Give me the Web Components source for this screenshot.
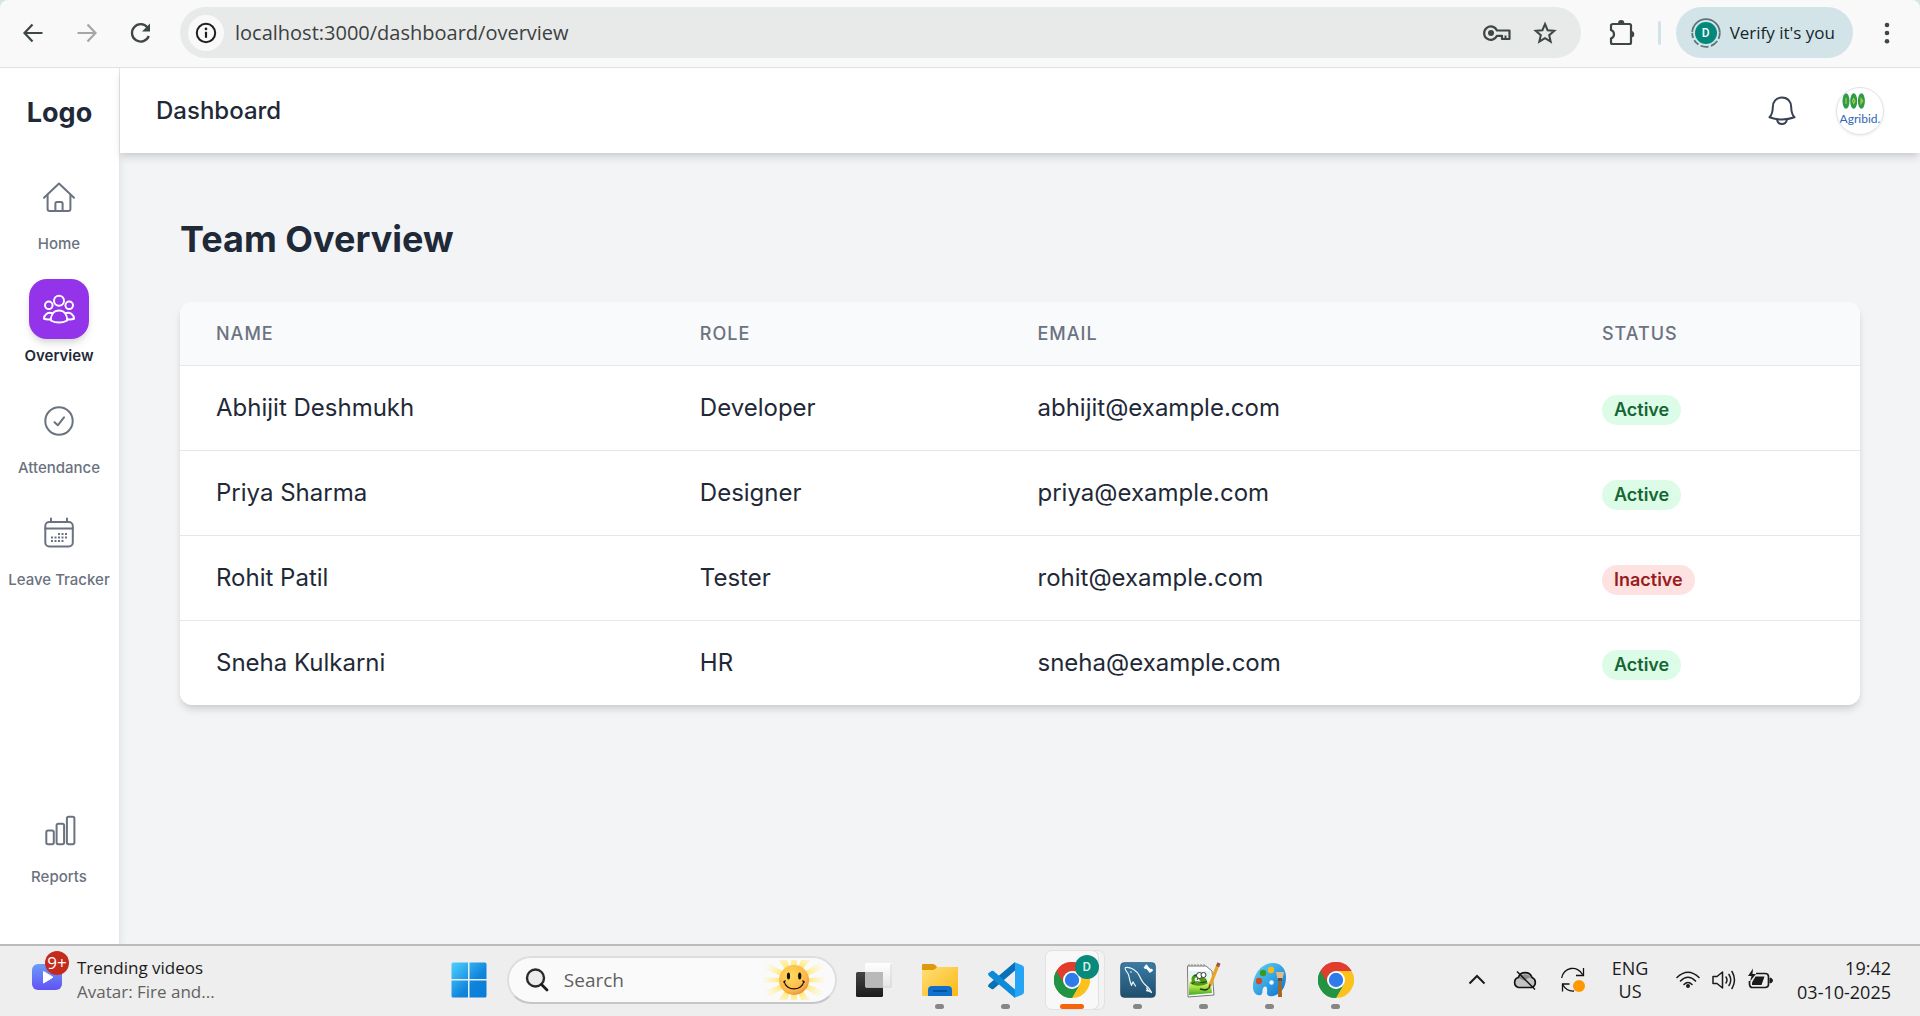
<!DOCTYPE html>
<html lang="en">
<head>
<meta charset="utf-8">
<title>Dashboard</title>
<style>
  html, body { margin: 0; height: 100%; }
  body { font-family: Inter, "Liberation Sans", sans-serif; background: #f3f4f6; overflow: hidden; }
</style>
</head>
<body>
<desktop-screen>
  <browser-toolbar slot="top" url="localhost:3000/dashboard/overview"></browser-toolbar>
  <dashboard-app slot="page">
    <side-nav slot="nav">
      <nav-item icon="home">Home</nav-item>
      <nav-item icon="team" active>Overview</nav-item>
      <nav-item icon="check">Attendance</nav-item>
      <nav-item icon="calendar">Leave Tracker</nav-item>
      <nav-item icon="reports" slot="bottom">Reports</nav-item>
    </side-nav>
    <page-header slot="header">Dashboard</page-header>
    <team-table>Team Overview</team-table>
  </dashboard-app>
  <task-bar slot="bottom"></task-bar>
</desktop-screen>

<script>
const svg = (w, h, body, extra = '') =>
  `<svg width="${w}" height="${h}" viewBox="0 0 ${w} ${h}" fill="none" aria-hidden="true" ${extra}>${body}</svg>`;
const line = 'stroke="currentColor" stroke-width="2" stroke-linecap="round" stroke-linejoin="round"';

const chrome = `
  <path d="M18 18 2.4 9A18 18 0 0 1 33.6 9Z" fill="#e33b2e"/>
  <path d="M18 18 2.4 9A18 18 0 0 0 18 36L25.8 22.5Z" fill="#229342"/>
  <path d="M18 9H33.6A18 18 0 0 1 18 36L25.8 22.5Z" fill="#fcc21b"/>
  <path d="M2.4 9 10.2 22.5 18 18 18 9Z" fill="#229342"/>
  <path d="M2.4 9A18 18 0 0 1 33.6 9H18A9 9 0 0 0 10.2 22.5Z" fill="#e33b2e"/>
  <path d="M2.4 9 10.2 22.5A9 9 0 0 0 25.8 22.5L18 36A18 18 0 0 1 2.4 9Z" fill="#229342"/>
  <circle cx="18" cy="18" r="9" fill="#fff"/><circle cx="18" cy="18" r="7.2" fill="#2f7bea"/>`;

const ICONS = {
  home: svg(36, 36, `<g ${line}><path d="M3 18.8 18 4.5 33 18.8"/><path d="M6.6 16V30a2 2 0 0 0 2 2H27.400a2 2 0 0 0 2-2V16"/><path d="M14.400 32V24.500a1.500 1.500 0 0 1 1.500-1.500H20.100a1.500 1.500 0 0 1 1.500 1.500V32"/></g>`),
  team: svg(36, 36, `<g ${line}><circle cx="18" cy="9.800" r="5"/><circle cx="7.800" cy="14.300" r="3.800"/><circle cx="28.200" cy="14.300" r="3.800"/><path d="M9.800 29.500C9.800 23.500 13 19.600 18 19.600S26.200 23.500 26.200 29.500Q22.500 31.600 18 31.600T9.800 29.500Z"/><path d="M11.500 22.200C6.500 20.800 3 24 3 27.800Q5.500 28.700 9.600 28.300"/><path d="M24.500 22.200C29.500 20.800 33 24 33 27.800Q30.500 28.700 26.400 28.300"/></g>`),
  check: svg(36, 36, `<g ${line}><circle cx="18" cy="18" r="13.700"/><path d="M13.500 19.200 16.800 22.300 23 14.300"/></g>`),
  calendar: svg(36, 36, `<g ${line}><rect x="4.300" y="7" width="27.500" height="24.500" rx="4"/><path d="M10 3.500V7M26 3.500V7M4.300 13.500H31.800"/></g><g fill="currentColor"><path d="M17 18h2v2h-2zM20.500 18h2v2h-2zM24 18h2v2h-2zM10 21.500h2v2h-2zM13.500 21.500h2v2h-2zM17 21.500h2v2h-2zM20.500 21.500h2v2h-2zM24 21.500h2v2h-2zM10 25h2v2h-2zM13.500 25h2v2h-2zM17 25h2v2h-2zM20.500 25h2v2h-2z"/></g>`),
  reports: svg(36, 36, `<g ${line}><rect x="5.300" y="18.500" width="7.500" height="13.800" rx="1.800"/><rect x="15.600" y="11.800" width="7.500" height="20.500" rx="1.800"/><rect x="25.900" y="4.800" width="7.500" height="27.500" rx="1.800"/></g>`),
  bell: svg(36, 36, `<g ${line}><path d="M18 4.500C12 4.500 8.800 9 8.800 14C8.800 18.500 8.200 21.500 5.500 24.300Q11.500 26.500 18 26.500T30.500 24.300C27.800 21.500 27.200 18.500 27.200 14C27.200 9 24 4.500 18 4.500Z"/><path d="M13.200 27a4.900 5 0 0 0 9.600 0"/></g>`),

  back: svg(24, 24, '<path d="M11.500 3.500 3.500 12l8 8.500M4 12h17.500" stroke="currentColor" stroke-width="2.200"/>'),
  forward: svg(24, 24, '<path d="M12.500 3.500 20.500 12l-8 8.500M20 12H2.500" stroke="currentColor" stroke-width="2.200"/>'),
  reload: svg(24, 24, '<path d="M19.800 15A8.700 8.700 0 1 1 18.500 6.500" stroke="currentColor" stroke-width="2.300"/><path d="M21 2.500V10.500H13Z" fill="currentColor"/>'),
  info: svg(24, 24, '<circle cx="12" cy="12" r="9.200" stroke="currentColor" stroke-width="2"/><path d="M12 10.800v6" stroke="currentColor" stroke-width="2.200"/><circle cx="12" cy="7.900" r="1.300" fill="currentColor"/>'),
  key: svg(28, 20, '<path d="M14 7.500A6.700 6.700 0 1 0 14 12.800H19V16H26.500V7.500Z" stroke="currentColor" stroke-width="2.200" stroke-linejoin="round"/><path d="M22.500 12.500V16" stroke="currentColor" stroke-width="2"/><circle cx="8" cy="10" r="3" fill="currentColor"/>'),
  star: svg(24, 24, '<path d="M12 3 14.600 9.200 21.300 9.800 16.200 14.200 17.700 20.700 12 17.200 6.300 20.700 7.800 14.200 2.700 9.800 9.400 9.200Z" stroke="currentColor" stroke-width="2"/>'),
  puzzle: svg(28, 28, '<path d="M5 5H21.500Q23 5 23 6.500V23.500Q23 25 21.500 25H4.500Q3 25 3 23.500V19.500A4.500 4.500 0 0 0 3 11V6.500Q3 5 5 5Z" stroke="currentColor" stroke-width="2.200"/><path d="M10 4.500a3.200 3.400 0 0 1 6.400 0zM23 12a3.200 3.200 0 0 1 0 6.500z" fill="currentColor"/>'),
  dots: svg(8, 24, '<g fill="currentColor"><circle cx="4" cy="4" r="2.300"/><circle cx="4" cy="12" r="2.300"/><circle cx="4" cy="20.300" r="2.300"/></g>'),

  windows: svg(36, 36, '<defs><linearGradient id="w" x1="0" y1="0" x2="36" y2="36" gradientUnits="userSpaceOnUse"><stop stop-color="#4fd2ff"/><stop offset=".6" stop-color="#0f84dc"/><stop offset="1" stop-color="#0a7ad6"/></linearGradient></defs><path d="M2 .5H17V17H.5V2Q.5.500 2 .5ZM18.500.5H34Q35.500.500 35.500 2V17H18.500ZM.5 18.500H17V35.500H2Q.5 35.500.5 34ZM18.500 18.500H35.500V34Q35.500 35.500 34 35.500H18.500Z" fill="url(#w)"/>'),
  search: svg(24, 24, '<circle cx="10.500" cy="10" r="8.500" fill="#ececec" stroke="#2a2a2a" stroke-width="2.400"/><path d="M16.500 16.500 22 22" stroke="#1b1b1b" stroke-width="2.800" stroke-linecap="round"/>'),
  sun: svg(60, 40, '<defs><radialGradient id="r" cx="30" cy="20" r="29" gradientUnits="userSpaceOnUse"><stop offset=".5" stop-color="#ffe97a"/><stop offset="1" stop-color="#fff3b8" stop-opacity=".3"/></radialGradient><radialGradient id="f" cx=".4" cy=".35" r=".7"><stop stop-color="#ffdc5a"/><stop offset=".75" stop-color="#fdb54a"/><stop offset="1" stop-color="#e88a3c"/></radialGradient></defs><path fill="url(#r)" d="M27 0h6v8h-6zM27 32h6v8h-6zM0 17l16 1v4L0 23zM60 17l-16 1v4l16 1zM14 0h9l3 8-4 2zM46 0h-9l-3 8 4 2zM14 40h9l3-8-4-2zM46 40h-9l-3-8 4-2zM5 3l15 9-3 4L1 9zM55 3l-15 9 3 4 16-7zM5 37l15-9-3-4L1 31zM55 37l-15-9 3-4 16 7z"/><circle cx="30" cy="20" r="15" fill="url(#f)"/><ellipse cx="24.500" cy="16" rx="1.600" ry="3.600" fill="#111"/><ellipse cx="35.700" cy="16" rx="1.600" ry="3.600" fill="#111"/><path d="M20 21C22 31.500 38 31.500 40 21M19.500 22.500l2-2M40.500 22.500l-2-2" stroke="#111" stroke-width="1.200"/>'),
  taskview: svg(36, 36, '<defs><linearGradient id="t" x2="0" y2="1"><stop stop-color="#444"/><stop offset="1" stop-color="#1c1c1c"/></linearGradient><linearGradient id="u" x2="0" y2="1"><stop stop-color="#fff"/><stop offset="1" stop-color="#e6e6e6"/></linearGradient></defs><rect y="10" width="27" height="25" rx="1.500" fill="url(#t)"/><rect x="9" y="1" width="27" height="24.500" rx="1.500" fill="url(#u)"/><path d="M10 25H35V2" stroke="#d4d4d4"/><path d="M9 10H27V25H9Z" fill="#b9b9b9"/>'),
  folder: svg(36, 36, '<defs><linearGradient id="o" x2="1" y2="1"><stop stop-color="#ffe07a"/><stop offset="1" stop-color="#fcb714"/></linearGradient></defs><path d="M0 3Q0 2 1 2H11Q13 2 15 5H35Q36 5 36 6V12H0Z" fill="#dc9a0c"/><path d="M0 8H11Q13 8 15 5H35Q36 5 36 6V33Q36 34 35 34H1Q0 34 0 33Z" fill="url(#o)"/><path d="M6 34V28Q6 24 10 24H26Q30 24 30 28V34Z" fill="#0f71cd"/><path d="M11 29H25" stroke="#07488a" stroke-width="1.500"/>'),
  vscode: svg(36, 36, '<path d="M0 24.500 3.500 27Q4.500 27.500 5.500 27L27 8.500V0L1 22Q0 23.200 0 24.500Z" fill="#0a70b8"/><path d="M0 11.500 3.500 9Q4.500 8.500 5.500 9L27 27.500V36L1 14Q0 12.800 0 11.500Z" fill="#0d8ad8"/><path d="M26 0 34.500 3.500Q36 4.200 36 6V30Q36 31.800 34.500 32.500L26 36Q27 35.500 27 34V2Q27 .5 26 0Z" fill="#27a5f5"/>'),
  chrome: svg(36, 36, chrome),
  mysql: svg(36, 36, '<defs><linearGradient id="m" x2="0" y2="1"><stop stop-color="#3a7ba6"/><stop offset="1" stop-color="#1f4e6c"/></linearGradient></defs><rect x=".5" y=".5" width="35" height="35" rx="4" fill="url(#m)" stroke="#16405c" stroke-opacity=".5"/><path d="M11.500 23.500C8.800 17 9.500 14 8 11.500C6 9 4.500 6.500 5.500 5.500C10 4.500 17 8.500 19.500 14C21.500 18.500 22.500 21 26 23.500C28.500 25.500 30 27.500 31 29.500C28.500 29 27.500 29.500 26.500 28.500M26.500 26C27.500 28.500 30 29.500 31.500 30.500M11.500 23.500C12 21.500 12.500 20.500 13 20L15.500 24" stroke="#eef6fb" stroke-width="1.200" stroke-linecap="round"/><circle cx="11" cy="10" r=".8" fill="#fff"/><path d="M26 4.500 30.500 9" stroke="#fff" stroke-width="3"/><path d="M24.500 6.500 27 3M29 10 32.500 7.500" stroke="#fff" stroke-width="2.200"/>'),
  notepad: svg(36, 36, '<defs><linearGradient id="n" x2="0" y2="1"><stop stop-color="#dff3ff"/><stop offset=".4" stop-color="#f2fae0"/><stop offset=".65" stop-color="#b4e34a"/><stop offset="1" stop-color="#3fae1c"/></linearGradient></defs><path d="M1.500 4H20L26 9 28 33 2 35Z" fill="#fdfdfd" stroke="#777"/><path d="M3 9H24L26 31 3 33Z" fill="url(#n)"/><path d="M3 4v-2M6 4v-2M9 4v-2M12 4v-2M15 4v-2M18 4v-2" stroke="#888"/><path d="M8 20C5 15 10 12 13 15L16 19C20 22 21 16 15 17M5 20C9 24 18 22 21 20" stroke="#4a9c10" stroke-width="3"/><path d="M6 22C10 17 16 23 21 19M8 14C11 12 13 16 11 18" stroke="#253a12" stroke-width="1"/><circle cx="13.500" cy="13.500" r="3" fill="#fff" stroke="#333"/><circle cx="17.500" cy="13" r="2.500" fill="#fff" stroke="#333"/><path d="M14 27l5 1 3-1" stroke="#22350f" stroke-width="1.600"/><path d="M31.500 4 24 23.500" stroke="#e9a51f" stroke-width="3.400"/><path d="M33 1 31.500 4.500" stroke="#a05048" stroke-width="3.400"/><path d="M24.200 22.500 22.500 27" stroke="#5a4326" stroke-width="1.500"/>'),
  paint: svg(36, 36, '<defs><linearGradient id="p" x2="1" y2="1"><stop stop-color="#5fd8f8"/><stop offset="1" stop-color="#0c6fd0"/></linearGradient></defs><path d="M21 1C9 1 1 13 1 25C1 31 5 34 8.500 33C12 32 9 27 12 25C16 23 15 29 15 31C15 35 20 35 24 33C31 30 34 23 34 15C34 7 29 1 21 1Z" fill="url(#p)"/><circle cx="11" cy="11" r="3.200" fill="#3b9a1d"/><circle cx="19" cy="8" r="3.200" fill="#fcb813"/><circle cx="7" cy="19" r="3.200" fill="#d4491d"/><circle cx="19.500" cy="20.500" r="2.200" fill="#eaf7ff"/><path d="M26.500 15H29.500L30 35H26Z" fill="#a8661c"/><path d="M24 10H32Q31.500 13 30.500 17H25.500Z" fill="#e3b987"/><path d="M25.800 16H30.200V19H25.800Z" fill="#555"/>'),
  widget: svg(30, 26, '<defs><linearGradient id="v" x2="0" y2="1"><stop stop-color="#6a9dfa"/><stop offset="1" stop-color="#6252f4"/></linearGradient></defs><rect width="30" height="26" rx="6" fill="url(#v)"/><path d="M11.500 7.500V19L21 13.200Z" fill="#fff" stroke="#fff" stroke-linejoin="round"/>'),
  chevron: svg(24, 24, '<path d="M4.500 15.500 12 8l7.500 7.500" stroke="currentColor" stroke-width="2"/>'),
  cloud: svg(26, 24, '<path d="M6.500 19.500A5.200 5.200 0 0 1 6.300 9.500A7.300 7.300 0 0 1 20 9.500A5.300 5.300 0 0 1 19.500 19.500Z" fill="#c4c4c4"/><path d="M6.500 10Q13 3 19 9.500Q14 10 13 13Z" fill="#8b8b8b"/><path d="M6.500 19.500A5.200 5.200 0 0 1 6.300 9.500A7.300 7.300 0 0 1 20 9.500A5.300 5.300 0 0 1 19.500 19.500Z" stroke="#111" stroke-width="1.700"/><path d="M5 3.500 23 21.500" stroke="#111" stroke-width="1.500"/>'),
  sync: svg(26, 28, '<path d="M1.700 12A11 11 0 0 1 22.500 8.500M23.500 2V9.500H16M2.500 25.500V18H9.500M3 19A11.500 11.500 0 0 0 14 25" stroke="#111" stroke-width="1.300"/><circle cx="19" cy="20" r="6" fill="#ff9800"/>'),
  wifi: svg(26, 24, '<g stroke="currentColor" stroke-width="1.600" stroke-linecap="round"><path d="M2 9.500Q13-1 24 9.500"/><path d="M5.500 13Q13 5.500 20.500 13"/><path d="M9 16.500Q13 12.500 17 16.500"/></g><circle cx="13" cy="18" r="2" fill="currentColor"/>'),
  speaker: svg(26, 24, '<g stroke="currentColor" stroke-width="1.500" stroke-linejoin="round" stroke-linecap="round"><path d="M2 8.500H6L11.500 4V20L6 15.500H2Z"/><path d="M15 9Q17 12 15 15M18 6.500Q21.500 12 18 17.500M21 3.500Q26 12 21 20.500"/></g>'),
  battery: svg(26, 24, '<path d="M9 5.500H18Q21.500 5.500 21.500 8.500V16Q21.500 19.500 18 19.500H5.500Q2.500 19.500 2.500 16V13" stroke="currentColor" stroke-width="1.700"/><path d="M23 10Q25.500 10.500 25.500 12.500T23 15Z" fill="currentColor" stroke="currentColor"/><path d="M8.500 8.500H17.500L14.500 17H5V14.500Z" fill="currentColor"/><path d="M6 .5 1 8H4.500L3 13.500 9 6H5.500Z" fill="currentColor"/>'),
};

function define(name, render) {
  customElements.define(name, class extends HTMLElement {
    connectedCallback() {
      if (this.shadowRoot) return;
      this.attachShadow({ mode: 'open' }).innerHTML = render(this);
    }
  });
}

const reset = `
  :host, * { box-sizing: border-box; }
  button { border: 0; padding: 0; background: none; font: inherit; color: inherit; display: inline-flex; align-items: center; justify-content: center; flex: none; }
  a { text-decoration: none; color: inherit; }
  input { border: 0; outline: 0; background: none; padding: 0; margin: 0; font: inherit; color: inherit; min-width: 0; }
  svg { display: block; flex: none; }`;

define('ui-icon', el => `<style>:host { display: inline-flex; flex: none; } svg { display: block; }</style>${ICONS[el.getAttribute('name')]}`);

define('desktop-screen', () => `<style>
  :host { display: flex; flex-direction: column; height: 100vh; }
  .page { flex: 1; min-height: 0; display: flex; }
  ::slotted([slot=page]) { flex: 1; min-width: 0; }
</style><slot name="top"></slot><div class="page"><slot name="page"></slot></div><slot name="bottom"></slot>`);

define('browser-toolbar', el => `<style>${reset}
  :host { display: block; flex: none; background: #d3e4e9; font-family: "Open Sans", "Noto Sans", sans-serif; color: #3f4746; }
  .bar { display: flex; align-items: center; height: 68px; padding: 0 21px 2px 15px; background: #f9f9f9; border-bottom: 1px solid #dfe1e1; border-radius: 8px 8px 0 0; }
  .nav { display: flex; gap: 18px; margin-right: 21px; }
  .nav button { width: 36px; height: 36px; }
  .off { color: #a5a7a7; }
  .address { flex: 1; min-width: 0; display: flex; align-items: center; height: 51px; border-radius: 26px; background: #e8eaea; padding: 0 24px 0 8px; }
  .info { width: 36px; height: 36px; border-radius: 50%; background: #f9f9f9; color: #1f1f1f; margin-right: 11px; }
  .address input { flex: 1; font-size: 20px; height: 36px; color: #3c4040; }
  .tools { display: flex; gap: 22px; }
  .puzzle { margin: 0 22px 0 27px; }
  .rule { width: 3px; height: 24px; border-radius: 2px; background: #d3e4e9; margin: 0 15px 0 0; }
  .verify { height: 51px; border-radius: 26px; background: #d3e4e9; padding: 0 18px 0 15px; gap: 9px; font-size: 17px; color: #14262a; white-space: nowrap; }
  .who { width: 30px; height: 30px; display: grid; place-items: center; position: relative; }
  .who svg { position: absolute; inset: 0; }
  .who span { position: relative; color: #fff; font: 500 12px Roboto, sans-serif; }
  .more { width: 24px; height: 36px; margin-left: 22px; }
</style>
<div class="bar">
  <div class="nav">
    <button aria-label="Back"><ui-icon name="back"></ui-icon></button>
    <button aria-label="Forward" class="off"><ui-icon name="forward"></ui-icon></button>
    <button aria-label="Reload"><ui-icon name="reload"></ui-icon></button>
  </div>
  <div class="address">
    <button class="info" aria-label="Site information"><ui-icon name="info"></ui-icon></button>
    <input type="text" aria-label="Address" value="${el.getAttribute('url')}">
    <div class="tools">
      <button aria-label="Passwords"><ui-icon name="key"></ui-icon></button>
      <button aria-label="Bookmark"><ui-icon name="star"></ui-icon></button>
    </div>
  </div>
  <button class="puzzle" aria-label="Extensions"><ui-icon name="puzzle"></ui-icon></button>
  <div class="rule"></div>
  <button class="verify"><span class="who">${svg(30, 30, '<circle cx="15" cy="15" r="13.800" stroke="#5c7479" stroke-width="1.800" stroke-dasharray="6 2.500 8 2.500 8 2.500 6 2.500 5 1 42"/><circle cx="15" cy="15" r="11" fill="#00897b"/>')}<span>D</span></span>Verify it's you</button>
  <button class="more" aria-label="Menu"><ui-icon name="dots"></ui-icon></button>
</div>`);

define('dashboard-app', () => `<style>
  :host { display: grid; grid-template-columns: 120px minmax(0, 1fr); background: #f3f4f6; color: #1f2937; overflow: hidden; }
  .main { display: flex; flex-direction: column; min-width: 0; }
  ::slotted([slot=header]) { z-index: 2; }
  ::slotted([slot=nav]) { z-index: 1; }
</style><slot name="nav"></slot><div class="main"><slot name="header"></slot><slot></slot></div>`);

define('side-nav', () => `<style>${reset}
  :host { display: flex; flex-direction: column; background: #fff; border-right: 1px solid #e5e7eb; box-shadow: 0 6px 9px -1px rgba(0,0,0,.1); }
  .logo { height: 99px; display: flex; align-items: center; justify-content: center; padding-bottom: 10px; font-size: 27px; line-height: 40px; font-weight: 700; color: #1f2937; }
  nav { flex: 1; display: flex; flex-direction: column; gap: 24px; }
  .end { margin-top: auto; padding-bottom: 56px; }
</style><div class="logo">Logo</div><nav><slot></slot><div class="end"><slot name="bottom"></slot></div></nav>`);

define('nav-item', el => `<style>${reset}
  :host { display: block; color: #6b7280; padding-right: 1px; }
  :host([active]) { color: #1f2937; }
  a { display: flex; flex-direction: column; align-items: center; gap: 6px; }
  .box { width: 60px; height: 60px; display: grid; place-items: center; border-radius: 18px; }
  :host([active]) .box { background: #9333ea; color: #fff; box-shadow: 0 6px 9px -1px rgba(0,0,0,.1), 0 3px 6px -2px rgba(0,0,0,.1); }
  .label { font-size: 15px; line-height: 22px; font-weight: 500; white-space: nowrap; }
  :host([active]) .label { font-weight: 600; }
</style><a href="#"><span class="box"><ui-icon name="${el.getAttribute('icon')}"></ui-icon></span><span class="label"><slot></slot></span></a>`);

define('page-header', () => `<style>${reset}
  :host { display: flex; align-items: center; gap: 36px; height: 85px; padding: 0 36px; background: #fff; box-shadow: 0 6px 9px -1px rgba(0,0,0,.1), 0 3px 6px -2px rgba(0,0,0,.1); }
  h1 { margin: 0 auto 0 0; font-size: 24px; line-height: 36px; font-weight: 500; color: #1f2937; }
  .bell { color: #374151; }
  .avatar { width: 48px; height: 48px; border-radius: 50%; border: 1px solid #e1e4e8; background: #fff; flex-direction: column; overflow: hidden; box-shadow: 0 1px 3px rgba(0,0,0,.08); }
  .avatar span { font: 400 12px/20px Lato, "Liberation Sans", sans-serif; color: #2f66b5; white-space: nowrap; }
</style><h1><slot></slot></h1>
<button class="bell" aria-label="Notifications"><ui-icon name="bell"></ui-icon></button>
<button class="avatar" aria-label="Account">${svg(36, 16, '<g fill="#2f9a4c"><ellipse cx="4" cy="8" rx="3.500" ry="7.700"/><ellipse cx="11.700" cy="8" rx="3.500" ry="7.700"/><ellipse cx="19.400" cy="8" rx="3.500" ry="7.700"/></g><path d="M4 5v6M10.500 8l1.200-2.500 1.300 2.500-1.300 2.500zM19 5.500v5l1.800-2.500z" stroke="#a8cf30" stroke-width="1.200"/>')}<span>Agribid.</span></button>`);

define('status-badge', () => `<style>
  :host { display: inline-block; padding: 3px 12px; border-radius: 15px; font-size: 18px; line-height: 24px; font-weight: 600; background: #dcfce7; color: #166534; }
  :host([kind=inactive]) { background: #fee2e2; color: #991b1b; }
</style><slot></slot>`);

const team = [
  ['Abhijit Deshmukh', 'Developer', 'abhijit@example.com', 'Active'],
  ['Priya Sharma', 'Designer', 'priya@example.com', 'Active'],
  ['Rohit Patil', 'Tester', 'rohit@example.com', 'Inactive'],
  ['Sneha Kulkarni', 'HR', 'sneha@example.com', 'Active'],
];
define('team-table', () => `<style>${reset}
  :host { display: block; padding: 60px; }
  h2 { margin: 0 0 36px; font-size: 36px; line-height: 53px; font-weight: 700; color: #1f2937; }
  .card { background: #fff; border-radius: 12px; overflow: hidden; box-shadow: 0 6px 9px -1px rgba(0,0,0,.1), 0 3px 6px -2px rgba(0,0,0,.1); }
  table { width: 100%; border-collapse: separate; border-spacing: 0; table-layout: fixed; }
  th { height: 64px; padding: 0 36px; text-align: left; font-size: 18px; line-height: 27px; font-weight: 500; letter-spacing: 1px; color: #6b7280; background: #f9fafb; border-bottom: 1px solid #e5e7eb; }
  td { height: 85px; padding: 0 36px; font-size: 24px; line-height: 36px; color: #1f2937; border-bottom: 1px solid #e5e7eb; white-space: nowrap; }
  tr:last-child td { border-bottom: 0; height: 84px; }
  .n { width: 28.8%; } .r { width: 20.1%; } .e { width: 33.6%; }
</style><h2><slot></slot></h2>
<div class="card"><table>
  <colgroup><col class="n"><col class="r"><col class="e"><col></colgroup>
  <thead><tr><th>NAME</th><th>ROLE</th><th>EMAIL</th><th>STATUS</th></tr></thead>
  <tbody>${team.map(([n, r, e, s]) => `<tr><td>${n}</td><td>${r}</td><td>${e}</td><td><status-badge kind="${s.toLowerCase()}">${s}</status-badge></td></tr>`).join('')}</tbody>
</table></div>`);

define('task-button', el => `<style>${reset}
  :host { display: flex; justify-content: center; width: 66px; }
  button { position: relative; flex-direction: column; width: 52px; height: 58px; border-radius: 6px; }
  .mark { position: absolute; bottom: 0; width: 9px; height: 5px; border-radius: 3px; background: #868686; }
  :host([plain]) .mark { display: none; }
  :host([open]) button { background: #f8f8f8; box-shadow: 0 0 0 1px #e2e2e2, 6px 0 0 #f3f3f3, 6px 0 0 1px #e2e2e2; }
  :host([open]) .mark { width: 24px; background: #f7630c; }
  .who { position: absolute; top: 4px; left: 29px; width: 24px; height: 24px; border-radius: 50%; background: #07897b; color: #d4efeb; font: 500 13px/24px Roboto, sans-serif; text-align: center; }
</style><button aria-label="${el.getAttribute('label')}"><ui-icon name="${el.getAttribute('icon')}"></ui-icon><span class="mark"></span>${el.hasAttribute('open') ? '<span class="who">D</span>' : ''}</button>`);

define('task-bar', () => `<style>${reset}
  :host { display: flex; align-items: center; flex: none; height: 72px; padding-bottom: 2px; background: #eee; border-top: 2px solid #b9bbbd; font-family: "Open Sans", "Noto Sans", sans-serif; font-size: 17px; line-height: 24px; color: #1b1b1b; }
  .news { flex: 0 0 22.7%; padding-left: 32px; display: flex; }
  .news button { gap: 15px; text-align: left; }
  .pic { position: relative; display: block; }
  .pic b { position: absolute; top: -13px; left: 13px; width: 24px; height: 24px; border-radius: 50%; background: #c42b1c; color: #fff; font-size: 17px; line-height: 23px; font-weight: 400; text-align: center; }
  small { display: block; font-size: 17px; color: #626262; }
  .apps { display: flex; align-items: center; }
  .find { display: flex; align-items: center; gap: 15px; width: 330px; height: 48px; margin: 0 4px 0 5px; padding: 0 11px 0 16px; border: 2px solid #dedede; border-bottom-color: #c6c6c6; border-radius: 24px; background: #fafafa; font-size: 19px; }
  .find input { flex: 1; height: 32px; }
  .find input::placeholder { color: #5f5f5f; opacity: 1; }
  .tray { margin-left: auto; padding-right: 29px; display: flex; align-items: center; font-size: 18px; }
  .hidden { margin-right: 23px; }
  .drive { margin-right: 22px; }
  .lang { margin: 0 26px 0 25px; width: 38px; line-height: 23px; }
  .set { gap: 10px; margin-right: 24px; }
  .late { text-align: right; }
</style>
<div class="news"><button><span class="pic"><ui-icon name="widget"></ui-icon><b>9+</b></span><span>Trending videos<small>Avatar: Fire and...</small></span></button></div>
<div class="apps">
  <task-button icon="windows" label="Start" plain></task-button>
  <label class="find"><ui-icon name="search"></ui-icon><input type="search" aria-label="Search" placeholder="Search"><ui-icon name="sun"></ui-icon></label>
  <task-button icon="taskview" label="Task view" plain></task-button>
  <task-button icon="folder" label="File Explorer"></task-button>
  <task-button icon="vscode" label="Visual Studio Code"></task-button>
  <task-button icon="chrome" label="Chrome, work profile" open></task-button>
  <task-button icon="mysql" label="MySQL Workbench"></task-button>
  <task-button icon="notepad" label="Notepad++"></task-button>
  <task-button icon="paint" label="Paint"></task-button>
  <task-button icon="chrome" label="Chrome"></task-button>
</div>
<div class="tray">
  <button class="hidden" aria-label="Hidden icons"><ui-icon name="chevron"></ui-icon></button>
  <button class="drive" aria-label="OneDrive"><ui-icon name="cloud"></ui-icon></button>
  <button aria-label="Update"><ui-icon name="sync"></ui-icon></button>
  <button class="lang"><span>ENG<br>US</span></button>
  <button class="set" aria-label="Quick settings"><ui-icon name="wifi"></ui-icon><ui-icon name="speaker"></ui-icon><ui-icon name="battery"></ui-icon></button>
  <button class="late"><span>19:42<br>03-10-2025</span></button>
</div>`);
</script>
</body>
</html>
